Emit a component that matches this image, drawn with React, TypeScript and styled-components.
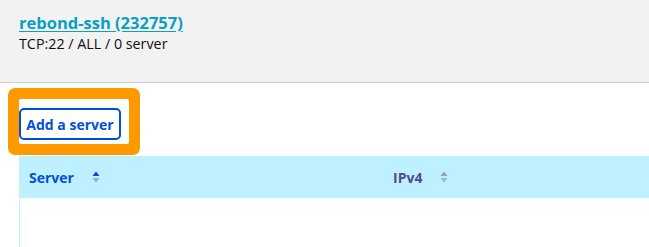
import React from "react";
import styled, { createGlobalStyle } from "styled-components";

const Global = createGlobalStyle`
  html, body { margin: 0; padding: 0; background: #fff; }
  body { font-family: "Open Sans", "Liberation Sans", sans-serif; overflow: hidden; }
`;

const Header = styled.header`
  box-sizing: border-box;
  height: 83px;
  background: #f2f2f2;
  border-bottom: 1px solid #cccccc;
  padding: 12px 19px 0;
`;

const Title = styled.a`
  display: inline-block;
  color: #0aa0c0;
  font-weight: 700;
  font-size: 16.5px;
  line-height: 22px;
  text-decoration: underline;
  text-underline-offset: 2px;
  cursor: pointer;
`;

const Sub = styled.div`
  margin-top: 0;
  color: #111;
  font-size: 14.3px;
  line-height: 19px;
`;

const Body = styled.main`
  padding: 16px 0 0 19px;
`;

const Highlight = styled.div`
  box-sizing: border-box;
  width: 110px;
  height: 45px;
  padding-top: 9px;
  background: #fff;
  border-radius: 2px;
  box-shadow: 0 0 0 11px #ff9900;
  margin-bottom: 12px;
`;

const Button = styled.button`
  box-sizing: border-box;
  width: 102px;
  height: 32px;
  padding: 0;
  background: #fff;
  border: 2px solid #0050d7;
  border-radius: 5px;
  color: #0050d7;
  font-family: inherit;
  font-weight: 700;
  font-size: 14px;
  cursor: pointer;
`;

const Table = styled.div`
  border-left: 1px solid #bef0ff;
  height: 100px;
`;

const HeadRow = styled.div`
  display: grid;
  grid-template-columns: 364px 1fr;
  height: 42px;
  background: #bef0ff;
`;

const HeadCell = styled.div<{ $active?: boolean }>`
  display: flex;
  align-items: center;
  padding-left: 9px;
  font-size: 14px;
  font-weight: 700;
  color: ${(p) => (p.$active ? "#0050d7" : "#4d4d8f")};
`;

const SortIcon = ({ active }: { active?: boolean }) => (
  <svg width="8" height="12" viewBox="0 0 8 12" style={{ marginLeft: 18 }}>
    <path d="M4 0.5 L7.5 5 L0.5 5 Z" fill={active ? "#0050d7" : "#8f9fc8"} />
    <path d="M4 11.5 L7.5 7 L0.5 7 Z" fill={active ? "#7fb3f0" : "#a0b3d8"} />
  </svg>
);

export default function App() {
  return (
    <>
      <Global />
      <Header>
        <Title>rebond-ssh (232757)</Title>
        <Sub>TCP:22 / ALL / 0 server</Sub>
      </Header>
      <Body>
        <Highlight>
          <Button>Add a server</Button>
        </Highlight>
        <Table>
          <HeadRow>
            <HeadCell $active>
              Server
              <SortIcon active />
            </HeadCell>
            <HeadCell>
              IPv4
              <SortIcon />
            </HeadCell>
          </HeadRow>
        </Table>
      </Body>
    </>
  );
}
